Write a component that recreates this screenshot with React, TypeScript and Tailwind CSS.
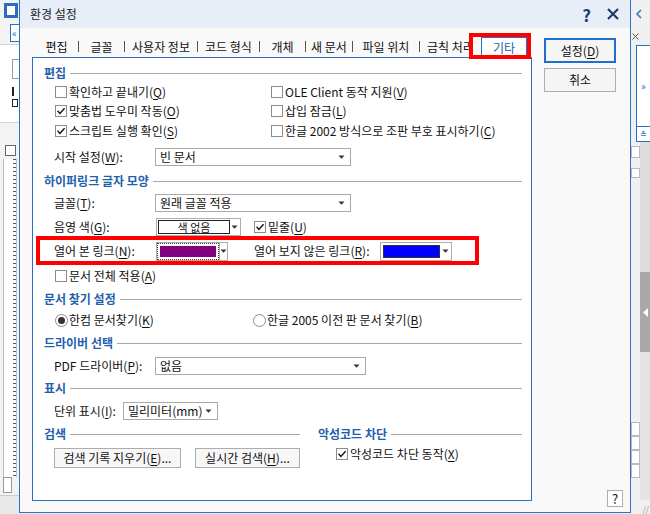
import React from 'react';

type Kids = { children?: React.ReactNode };

function Mn({ k }: { k: string }) {
  return (
    <span>
      (<u className="underline-offset-2">{k}</u>)
    </span>
  );
}

function Arrow() {
  return (
    <svg width="7" height="4" viewBox="0 0 7 4">
      <path d="M0.5 0.5h6L3.5 3.8z" fill="#333" />
    </svg>
  );
}

function Check({ on, children }: { on?: boolean } & Kids) {
  return (
    <div className="flex items-center h-full">
      <span className="w-[12px] h-[12px] border border-[#8c8c8c] bg-white flex items-center justify-center shrink-0">
        {on && (
          <svg width="10" height="10" viewBox="0 0 10 10">
            <path d="M1.6 4.8l2.3 2.6L8.6 2.2" fill="none" stroke="#111" strokeWidth="1.4" />
          </svg>
        )}
      </span>
      <span className="ml-[2px] whitespace-nowrap">{children}</span>
    </div>
  );
}

function Radio({ on, children }: { on?: boolean } & Kids) {
  return (
    <div className="flex items-center h-full">
      <span className="w-[13px] h-[13px] rounded-full border border-[#8c8c8c] bg-white flex items-center justify-center shrink-0">
        {on && <span className="w-[7px] h-[7px] rounded-full bg-[#333]" />}
      </span>
      <span className="ml-[1px] whitespace-nowrap">{children}</span>
    </div>
  );
}

function Header({ title, className = '' }: { title: string; className?: string }) {
  return (
    <div className={'flex items-center h-[18px] ' + className}>
      <span className="text-[#1f5fae] font-bold whitespace-nowrap">{title}</span>
      <div className="flex-1 h-px bg-[#a8a8a8] ml-[4px] mt-[1px]" />
    </div>
  );
}

function Select({ value, className }: { value: string; className: string }) {
  return (
    <div className={'flex items-center justify-between h-[18px] border border-[#a9a9a9] bg-white pl-[4px] pr-[5px] ' + className}>
      <span className="whitespace-nowrap">{value}</span>
      <Arrow />
    </div>
  );
}

function LeftStrip() {
  return (
    <div className="w-[19px] h-full flex flex-col bg-[#f3f3f3] overflow-hidden shrink-0">
      <div className="h-[22px] pl-[4px] pt-[3px]">
        <div className="w-[14px] h-[15px] bg-[#2a6ebd] flex items-center justify-center">
          <div className="w-[8px] h-[9px] bg-white" />
        </div>
      </div>
      <div className="h-[22px] pl-[10px] pt-[2px]">
        <div className="w-[12px] h-[18px] border border-[#2a6ebd] bg-white text-[#2a6ebd] text-[10px] leading-[15px] pl-[1px]">«</div>
      </div>
      <div className="h-[79px] bg-white border-y border-[#d4d4d4] pl-[12px] pt-[14px]">
        <div className="w-[7px] h-[20px] border border-r-0 border-[#999]" />
        <div className="mt-[8px] w-[5px] h-[9px] border-l-2 border-[#222]" />
        <div className="mt-[3px] w-[6px] h-[8px] border border-[#222]" />
      </div>
      <div className="h-[22px]" />
      <div className="h-[14px] pl-[5px]">
        <div className="w-[11px] h-[11px] border border-[#666] bg-white" />
      </div>
      <div className="h-[318px] ml-[3px] w-[14px] bg-white border-x border-[#bdbdbd] flex justify-end">
        <div className="w-[3px] h-full bg-[repeating-linear-gradient(to_bottom,#555_0,#555_1px,transparent_1px,transparent_4px)]" />
      </div>
      <div className="h-[18px] ml-[3px] flex">
        <div className="w-[9px] h-[16px] border border-[#999] bg-white" />
      </div>
      <div className="flex-1 bg-[#e9e9e9] border-t border-[#ccc]" />
    </div>
  );
}

function RightStrip() {
  return (
    <div className="w-[19px] h-full flex flex-col bg-[#f0f0f0] overflow-hidden shrink-0">
      <div className="h-[28px] pl-[5px] flex items-center">
        <svg width="6" height="10" viewBox="0 0 6 10">
          <path d="M5 1L1 5l4 4" fill="none" stroke="#2a6ebd" strokeWidth="1.5" />
        </svg>
      </div>
      <div className="h-[17px] pl-[1px] flex items-center">
        <svg width="7" height="7" viewBox="0 0 7 7">
          <path d="M0.5 0.5l6 6M6.5 0.5l-6 6" stroke="#555" strokeWidth="1" />
        </svg>
      </div>
      <div className="h-[82px] ml-[5px] border border-r-0 border-[#2a6ebd] bg-white flex items-center justify-center text-[#2a6ebd] text-[10px]">»</div>
      <div className="h-[15px] ml-[5px] border border-r-0 border-t-0 border-[#2a6ebd] bg-white flex items-center justify-center text-[#2a6ebd] text-[8px]">≛</div>
      <div className="flex-1 flex">
        <div className="w-[9px] flex flex-col">
          <div className="h-[12px] mt-[4px] border border-[#bbb] bg-white" />
          <div className="h-[10px] mt-[10px] border border-[#bbb] bg-white" />
          <div className="flex-1" />
          <div className="h-[14px] border border-[#bbb] bg-white" />
          <div className="h-[14px] border border-[#bbb] bg-white" />
          <div className="h-[14px] border border-[#bbb] bg-white" />
          <div className="h-[14px] border border-[#bbb] bg-white mb-[36px]" />
        </div>
        <div className="flex-1 flex flex-col">
          <div className="h-[130px] bg-[#dcdcdc]" />
          <div className="h-[80px] bg-[#a9a9a9] flex items-center justify-center">
            <svg width="5" height="9" viewBox="0 0 5 9">
              <path d="M5 0v9L0 4.5z" fill="#fff" />
            </svg>
          </div>
          <div className="flex-1 bg-[#e4e4e4]" />
          <div className="h-[14px] bg-[#f0f0f0] flex items-end justify-end pr-[1px] pb-[1px] text-[8px] leading-none text-[#888]">//</div>
        </div>
      </div>
    </div>
  );
}

const tabs: [string, string][] = [
  ['편집', 'w-[43px]'],
  ['글꼴', 'w-[45px]'],
  ['사용자 정보', 'w-[72px]'],
  ['코드 형식', 'w-[61px]'],
  ['개체', 'w-[45px]'],
  ['새 문서', 'w-[46px]'],
  ['파일 위치', 'w-[66px]'],
  ['금칙 처리', 'w-[61px]'],
];

function Tabs() {
  return (
    <div className="flex items-end h-[29px] pl-[3px]">
      {tabs.map(([t, w], i) => (
        <React.Fragment key={t}>
          {i > 0 && <span className="w-px h-[11px] bg-[#555] mb-[5px]" />}
          <div className={'flex items-center justify-center h-[20px] whitespace-nowrap ' + w}>{t}</div>
        </React.Fragment>
      ))}
      <div className="relative z-10 h-[21px] w-[46px] -mb-px border border-b-0 border-[#2a6fc0] bg-white text-[#1f5fae] flex items-center justify-center">
        기타
        <div className="absolute left-[-13px] top-[-5px] w-[62px] h-[26px] border-4 border-[#ff0000]" />
      </div>
    </div>
  );
}

function Panel() {
  return (
    <div className="w-[500px] h-[444px] border border-[#2a6fc0] bg-white pt-[6px] flex flex-col">
      <Header title="편집" className="pl-[11px] pr-[9px]" />
      <div className="pl-[22px] grid grid-cols-[216px_1fr] h-[19px]">
        <Check>확인하고 끝내기<Mn k="Q" /></Check>
        <Check>OLE Client 동작 지원<Mn k="V" /></Check>
      </div>
      <div className="pl-[22px] grid grid-cols-[216px_1fr] h-[20px]">
        <Check on>맞춤법 도우미 작동<Mn k="O" /></Check>
        <Check>삽입 잠금<Mn k="L" /></Check>
      </div>
      <div className="pl-[22px] grid grid-cols-[216px_1fr] h-[20px]">
        <Check on>스크립트 실행 확인<Mn k="S" /></Check>
        <Check>한글 2002 방식으로 조판 부호 표시하기<Mn k="C" /></Check>
      </div>
      <div className="mt-[7px] pl-[21px] flex items-center h-[18px]">
        <span className="w-[101px]">시작 설정<Mn k="W" />:</span>
        <Select value="빈 문서" className="w-[196px]" />
      </div>

      <Header title="하이퍼링크 글자 모양" className="mt-[6px] pl-[11px] pr-[9px]" />
      <div className="mt-[4px] pl-[21px] flex items-center h-[18px]">
        <span className="w-[101px]">글꼴<Mn k="T" />:</span>
        <Select value="원래 글꼴 적용" className="w-[196px]" />
      </div>
      <div className="mt-[6px] pl-[21px] flex items-center h-[18px]">
        <span className="w-[102px]">음영 색<Mn k="G" />:</span>
        <div className="flex h-[18px] w-[85px] border border-[#adadad] bg-white p-px">
          <div className="w-[72px] h-full border border-[#222] flex items-center justify-center text-[11px]">색 없음</div>
          <div className="flex-1 flex items-center justify-center">
            <Arrow />
          </div>
        </div>
        <div className="ml-[13px] h-full">
          <Check on>밑줄<Mn k="U" /></Check>
        </div>
      </div>
      <div className="relative mt-[6px] pl-[21px] flex items-center h-[18px]">
        <span className="w-[102px]">열어 본 링크<Mn k="N" />:</span>
        <div className="flex h-[19px] w-[72px] border border-[#adadad] bg-white">
          <div className="w-[62px] h-full border border-dotted border-[#333] p-[2px]">
            <div className="w-full h-full bg-[#800080]" />
          </div>
          <div className="flex-1 flex items-center justify-center border-l border-[#adadad]">
            <Arrow />
          </div>
        </div>
        <span className="ml-[26px] w-[126px] whitespace-nowrap">열어 보지 않은 링크<Mn k="R" />:</span>
        <div className="flex h-[19px] w-[72px] border border-[#adadad] bg-white p-[2px] pr-0">
          <div className="w-[57px] h-full border border-[#333] bg-[#0000ff]" />
          <div className="flex-1 flex items-center justify-center">
            <Arrow />
          </div>
        </div>
        <div className="absolute left-[3px] top-[-6px] w-[443px] h-[29px] border-4 border-[#ff0000]" />
      </div>
      <div className="mt-[7px] pl-[22px] h-[18px]">
        <Check>문서 전체 적용<Mn k="A" /></Check>
      </div>

      <Header title="문서 찾기 설정" className="mt-[5px] pl-[11px] pr-[9px]" />
      <div className="mt-[3px] pl-[22px] grid grid-cols-[198px_1fr] h-[18px]">
        <Radio on>한컴 문서찾기<Mn k="K" /></Radio>
        <Radio>한글 2005 이전 판 문서 찾기<Mn k="B" /></Radio>
      </div>

      <Header title="드라이버 선택" className="mt-[5px] pl-[11px] pr-[9px]" />
      <div className="mt-[5px] pl-[21px] flex items-center h-[18px]">
        <span className="w-[101px]">PDF 드라이버<Mn k="P" />:</span>
        <Select value="없음" className="w-[211px]" />
      </div>

      <Header title="표시" className="mt-[4px] pl-[11px] pr-[9px]" />
      <div className="mt-[5px] pl-[21px] flex items-center h-[18px]">
        <span className="w-[69px] whitespace-nowrap">단위 표시<Mn k="I" />:</span>
        <Select value="밀리미터(mm)" className="w-[95px]" />
      </div>

      <div className="mt-[5px] grid grid-cols-[267px_1fr] gap-x-[18px]">
        <div className="flex flex-col">
          <Header title="검색" className="pl-[11px]" />
          <div className="mt-[5px] pl-[21px] flex h-[20px] gap-[14px]">
            <button className="w-[127px] h-full border border-[#adadad] bg-[#f7f7f7] whitespace-nowrap">
              검색 기록 지우기<Mn k="E" />...
            </button>
            <button className="w-[105px] h-full border border-[#adadad] bg-[#f7f7f7] whitespace-nowrap">
              실시간 검색<Mn k="H" />...
            </button>
          </div>
        </div>
        <div className="flex flex-col pr-[9px]">
          <Header title="악성코드 차단" />
          <div className="mt-[4px] pl-[18px] h-[14px]">
            <Check on>악성코드 차단 동작<Mn k="X" /></Check>
          </div>
        </div>
      </div>
    </div>
  );
}

export default function App() {
  return (
    <div className="w-[650px] h-[514px] flex bg-[#ececec] overflow-hidden text-[12px] leading-[16px] text-[#111] font-['Noto_Sans_CJK_KR','Noto_Sans',sans-serif]">
      <LeftStrip />
      <div className="w-[612px] h-[513px] flex flex-col border border-t-0 border-[#2b73c5] bg-[#f9f9f9] shrink-0">
        <div className="h-[28px] flex items-center bg-[#e7eef8] pl-[10px] pr-[11px]">
          <span className="text-[#222]">환경 설정</span>
          <div className="flex-1" />
          <span className="text-[17px] font-bold text-[#1b3b73] leading-none">?</span>
          <svg className="ml-[16px]" width="12" height="12" viewBox="0 0 12 12">
            <path d="M1 1l10 10M11 1L1 11" stroke="#1b3b73" strokeWidth="2.2" />
          </svg>
        </div>
        <div className="flex-1 flex">
          <div className="ml-[12px] flex flex-col">
            <Tabs />
            <Panel />
          </div>
          <div className="ml-[12px] flex-1 flex flex-col pr-[7px] pb-[5px]">
            <button className="mt-[10px] w-[72px] h-[25px] border-2 border-[#1d6fd0] bg-[#f5f5f5]">
              설정<Mn k="D" />
            </button>
            <button className="mt-[5px] w-[72px] h-[24px] border border-[#adadad] bg-[#f5f5f5]">취소</button>
            <div className="flex-1" />
            <div className="self-end w-[16px] h-[17px] border border-[#adadad] bg-white flex items-center justify-center text-[13px]">?</div>
          </div>
        </div>
      </div>
      <RightStrip />
    </div>
  );
}
